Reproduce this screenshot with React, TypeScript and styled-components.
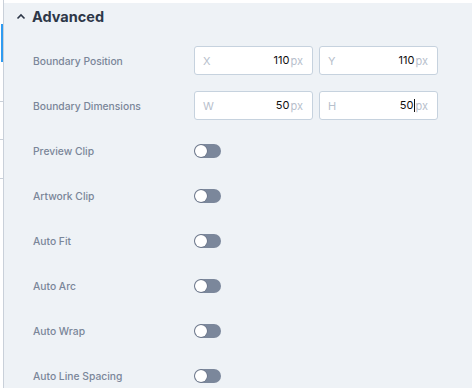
import styled, { createGlobalStyle } from 'styled-components'

const Global = createGlobalStyle`
  html, body {
    margin: 0;
    padding: 0;
    background: #fff;
    font-family: Inter, "Open Sans", sans-serif;
  }
`

const Page = styled.div`
  display: flex;
  width: 472px;
  height: 388px;
  overflow: hidden;
  background: #fff;
`

const Rail = styled.div`
  width: 3px;
  border-right: 1px solid #c9d0d9;
  padding-top: 24px;
  flex-shrink: 0;
`

const RailActive = styled.div`
  width: 2px;
  height: 38px;
  margin-left: 1px;
  background: #2f9bf0;
`

const RailTick = styled.div<{ $gap: number }>`
  height: 1px;
  margin-top: ${p => p.$gap}px;
  background: #c9d0d9;
`

const Main = styled.div`
  flex: 1;
  padding-top: 3px;
`

const Panel = styled.div`
  background: #eef2f6;
  height: 100%;
  padding-left: 12px;
`

const Header = styled.div`
  height: 35px;
  display: flex;
  align-items: center;
  padding-bottom: 8px;
  box-sizing: border-box;
  gap: 6px;
  font-size: 14.5px;
  font-weight: 700;
  color: #2d3748;
  svg {
    flex-shrink: 0;
  }
`

const Row = styled.div`
  display: flex;
  align-items: center;
  height: 45px;
  padding-left: 17px;
`

const Label = styled.div`
  width: 161px;
  font-size: 10.3px;
  font-weight: 500;
  color: #7a8699;
  flex-shrink: 0;
`

const Pair = styled.div`
  display: flex;
  gap: 6px;
`

const Field = styled.div`
  width: 119px;
  height: 29px;
  box-sizing: border-box;
  display: flex;
  align-items: center;
  padding: 0 9px 0 8px;
  background: #fff;
  border: 1px solid #c6d2de;
  border-radius: 3px;
  font-size: 11px;
`

const Axis = styled.span`
  color: #b7c0cc;
  flex: 1;
`

const Value = styled.span<{ $caret?: boolean }>`
  color: #111;
  font-weight: 400;
  border-right: ${p => (p.$caret ? '1px solid #111' : 'none')};
  line-height: 13px;
`

const Unit = styled.span`
  color: #b7c0cc;
  margin-left: 1px;
`

const Toggle = styled.div`
  width: 27px;
  height: 14px;
  border-radius: 7px;
  background: #7b879b;
  display: flex;
  align-items: center;
  padding: 1px;
  box-sizing: border-box;
`

const Knob = styled.div`
  width: 12px;
  height: 12px;
  border-radius: 50%;
  background: #fff;
  box-shadow: 0 0 0 0.5px #5d677a;
`

const Chevron = () => (
  <svg width="10" height="10" viewBox="0 0 10 10">
    <path d="M1.5 6.5 L5 3 L8.5 6.5" fill="none" stroke="#2d3748" strokeWidth="1.6" />
  </svg>
)

const toggles = ['Preview Clip', 'Artwork Clip', 'Auto Fit', 'Auto Arc', 'Auto Wrap', 'Auto Line Spacing']

export default function App() {
  return (
    <Page>
      <Global />
      <Rail>
        <RailActive />
        <RailTick $gap={39} />
        <RailTick $gap={37} />
        <RailTick $gap={38} />
      </Rail>
      <Main>
        <Panel>
          <Header>
            <Chevron />
            Advanced
          </Header>
          <Row>
            <Label>Boundary Position</Label>
            <Pair>
              <Field><Axis>X</Axis><Value>110</Value><Unit>px</Unit></Field>
              <Field><Axis>Y</Axis><Value>110</Value><Unit>px</Unit></Field>
            </Pair>
          </Row>
          <Row>
            <Label>Boundary Dimensions</Label>
            <Pair>
              <Field><Axis>W</Axis><Value>50</Value><Unit>px</Unit></Field>
              <Field><Axis>H</Axis><Value $caret>50</Value><Unit>px</Unit></Field>
            </Pair>
          </Row>
          {toggles.map(t => (
            <Row key={t}>
              <Label>{t}</Label>
              <Toggle><Knob /></Toggle>
            </Row>
          ))}
        </Panel>
      </Main>
    </Page>
  )
}
